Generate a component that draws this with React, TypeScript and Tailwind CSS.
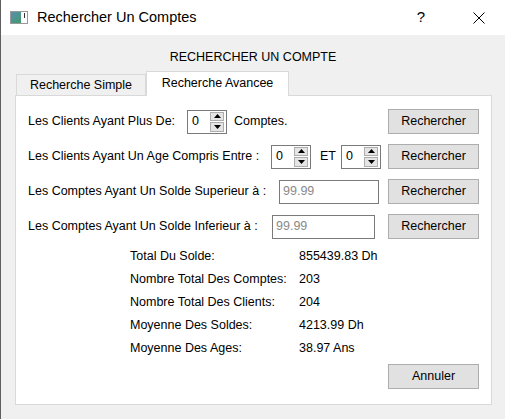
const font = { fontFamily: '"Liberation Sans", Arial, sans-serif' };

function SpinBox() {
    return (
        <div className="flex h-[24px] w-[40px] items-center border border-[#7a7a7a] bg-white">
            <span className="flex-1 pl-[4px] text-[12.5px] leading-none text-black">0</span>
            <div className="mr-[2px] flex h-[20px] w-[14px] flex-col gap-[1px]">
                <div className="flex flex-1 items-center justify-center border border-[#adadad] bg-[#e5e5e5]">
                    <svg width="7" height="4" viewBox="0 0 7 4">
                        <path d="M0 4 L3.5 0 L7 4 Z" fill="#000" />
                    </svg>
                </div>
                <div className="flex flex-1 items-center justify-center border border-[#adadad] bg-[#e5e5e5]">
                    <svg width="7" height="4" viewBox="0 0 7 4">
                        <path d="M0 0 L3.5 4 L7 0 Z" fill="#000" />
                    </svg>
                </div>
            </div>
        </div>
    );
}

function Button({ label }: { label: string }) {
    return (
        <button className="ml-auto h-[25px] w-[91px] border border-[#adadad] bg-[#e1e1e1] text-[12.5px] text-black">
            {label}
        </button>
    );
}

function TextField({ w }: { w: string }) {
    return (
        <div className={`flex h-[24px] items-center border border-[#7a7a7a] bg-white pl-[3px] text-[12.5px] text-[#8a8a8a] ${w}`}>
            99.99
        </div>
    );
}

const stats = [
    { label: "Total Du Solde:", value: "855439.83 Dh" },
    { label: "Nombre Total Des Comptes:", value: "203" },
    { label: "Nombre Total Des Clients:", value: "204" },
    { label: "Moyenne Des Soldes:", value: "4213.99 Dh" },
    { label: "Moyenne Des Ages:", value: "38.97 Ans" },
];

export default function App() {
    return (
        <div className="flex h-[419px] w-[505px] flex-col overflow-hidden border-l border-[#5f5f5f] bg-[#f0f0f0] text-black" style={font}>
            {/* title bar */}
            <div className="flex h-[35px] shrink-0 items-center bg-white">
                <div className="ml-[9px] flex h-[13px] w-[18px] border border-[#9a9a9a] bg-white">
                    <div className="h-full w-[10px] bg-gradient-to-br from-[#5b8db0] to-[#3f9a6a]" />
                    <div className="ml-[3px] mt-[1px] h-[5px] w-[1px] bg-[#333]" />
                </div>
                <span className="ml-[9px] text-[14.5px]">Rechercher Un Comptes</span>
                <span className="ml-auto mr-[48px] text-[15px]">?</span>
                <svg className="mr-[20px]" width="12" height="12" viewBox="0 0 12 12">
                    <path d="M0.5 0.5 L11.5 11.5 M11.5 0.5 L0.5 11.5" stroke="#000" strokeWidth="1" />
                </svg>
            </div>

            <div className="mt-[14px] text-center text-[12.5px] leading-[16px]">RECHERCHER UN COMPTE</div>

            {/* tabs */}
            <div className="ml-[14px] mt-[6px] flex h-[24px] items-end">
                <div className="-mb-px ml-px flex h-[22px] w-[130px] items-center justify-center border border-b-0 border-[#d9d9d9] bg-[#f0f0f0] text-[12.5px]">
                    Recherche Simple
                </div>
                <div className="relative z-10 -mb-px flex h-[25px] w-[143px] items-center justify-center border border-b-0 border-[#d9d9d9] bg-white pb-[2px] text-[12.5px]">
                    Recherche Avancee
                </div>
            </div>

            <div className="ml-[14px] flex h-[310px] w-[477px] flex-col border border-[#d9d9d9] bg-white px-[12px] pt-[13px] text-[12.5px]">
                <div className="flex h-[25px] items-center">
                    <span className="w-[159px]">Les Clients Ayant Plus De:</span>
                    <SpinBox />
                    <span className="ml-[7px]">Comptes.</span>
                    <Button label="Rechercher" />
                </div>
                <div className="mt-[10px] flex h-[25px] items-center">
                    <span className="w-[243px]">Les Clients Ayant Un Age Compris Entre :</span>
                    <SpinBox />
                    <span className="ml-[9px] w-[21px]">ET</span>
                    <SpinBox />
                    <Button label="Rechercher" />
                </div>
                <div className="mt-[10px] flex h-[25px] items-center">
                    <span className="w-[251px]">Les Comptes Ayant Un Solde Superieur à :</span>
                    <TextField w="w-[100px]" />
                    <Button label="Rechercher" />
                </div>
                <div className="mt-[10px] flex h-[25px] items-center">
                    <span className="w-[244px]">Les Comptes Ayant Un Solde Inferieur à :</span>
                    <TextField w="w-[103px]" />
                    <Button label="Rechercher" />
                </div>

                <div className="ml-[102px] mt-[6px] flex flex-col">
                    {stats.map((s) => (
                        <div key={s.label} className="flex h-[23px] items-center">
                            <span className="w-[169px]">{s.label}</span>
                            <span>{s.value}</span>
                        </div>
                    ))}
                </div>

                <div className="mt-[4px] flex">
                    <Button label="Annuler" />
                </div>
            </div>
        </div>
    );
}
